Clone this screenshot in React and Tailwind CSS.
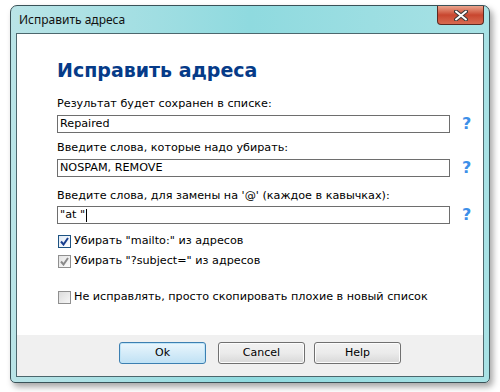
const font = { fontFamily: '"DejaVu Sans", Verdana, sans-serif' }

function Check({ state }) {
  if (state === 'on') {
    return (
      <span className="flex h-[13px] w-[13px] items-center justify-center border border-[#1d5281] bg-gradient-to-br from-[#dfe9f5] to-[#ffffff]">
        <svg width="9" height="9" viewBox="0 0 9 9">
          <path d="M1 4.5 L3.5 7.5 L8 1" fill="none" stroke="#1a3f8f" strokeWidth="2" />
        </svg>
      </span>
    )
  }
  if (state === 'dim') {
    return (
      <span className="flex h-[13px] w-[13px] items-center justify-center border border-[#8f8f8f] bg-gradient-to-br from-[#e3e3e3] to-[#fbfbfb]">
        <svg width="9" height="9" viewBox="0 0 9 9">
          <path d="M1 4.5 L3.5 7.5 L8 1" fill="none" stroke="#8a8a8a" strokeWidth="2" />
        </svg>
      </span>
    )
  }
  return <span className="block h-[13px] w-[13px] border border-[#8f8f8f] bg-gradient-to-br from-[#dcdcdc] to-[#f6f6f6]" />
}

function Field({ value, caret }) {
  return (
    <div className="flex items-center">
      <div className="flex h-[18px] w-[393px] items-center border border-[#6e6e6e] bg-white px-[2px] text-[11.2px] text-black">
        <span>{value}</span>
        {caret && <span className="ml-[1px] h-[13px] w-[1px] bg-black" />}
      </div>
      <span className="ml-[12px] text-[16px] font-bold leading-none text-[#3d8fe8]">?</span>
    </div>
  )
}

function Btn({ children, focus, className }) {
  return (
    <div
      className={
        'flex h-[22px] w-[87px] items-center justify-center rounded-[3px] border text-[11px] text-black ' +
        (focus
          ? 'border-[#3c7fb1] bg-gradient-to-b from-[#eaf6fd] to-[#c0e1f4] shadow-[inset_0_0_0_1px_#bfe4f7] '
          : 'border-[#707070] bg-gradient-to-b from-[#f2f2f2] via-[#ebebeb] to-[#d8d8d8] shadow-[inset_0_0_0_1px_#fcfcfc] ') +
        (className || '')
      }
    >
      {children}
    </div>
  )
}

export default function App() {
  return (
    <div className="h-[392px] w-[500px] overflow-hidden bg-white pl-[10px] pt-[5px]" style={font}>
      <div className="flex h-[378px] w-[480px] flex-col rounded-t-[7px] rounded-b-[5px] border border-[#3a5258] bg-gradient-to-r from-[#b9e4e7] via-[#8fdadf] to-[#a8e2e5] shadow-[3px_4px_6px_rgba(0,0,0,0.35)]">
        <div className="flex h-[27px] shrink-0 items-start">
          <span
            className="ml-[8px] mt-[6px] text-[12px] leading-[15px] text-[#111]"
            style={{ fontFamily: '"Noto Sans", "Open Sans", sans-serif' }}
          >
            Исправить адреса
          </span>
          <div className="ml-auto mr-[5px] flex h-[19px] w-[47px] items-center justify-center rounded-b-[4px] border border-t-0 border-[#5b2a22] bg-gradient-to-b from-[#eaa38c] via-[#c8462f] to-[#d86a50]">
            <svg width="14" height="11" viewBox="0 0 14 11">
              <path d="M2 1.5 L12 9.5 M12 1.5 L2 9.5" stroke="#3a3a3a" strokeWidth="4" strokeLinecap="round" />
              <path d="M2 1.5 L12 9.5 M12 1.5 L2 9.5" stroke="#ffffff" strokeWidth="2" strokeLinecap="round" />
            </svg>
          </div>
        </div>
        <div className="mx-[5px] flex h-[344px] flex-col border border-[#4c676d] bg-white">
          <div className="flex flex-1 flex-col pl-[40px]">
            <h1 className="mt-[25px] text-[19px] font-bold leading-[22px] text-[#063b88]">Исправить адреса</h1>
            <p className="mt-[15px] text-[11.2px] leading-[16px] text-black">Результат будет сохранен в списке:</p>
            <div className="mt-[3px]">
              <Field value="Repaired" />
            </div>
            <p className="mt-[7px] text-[11.2px] leading-[16px] text-black">Введите слова, которые надо убирать:</p>
            <div className="mt-[3px]">
              <Field value="NOSPAM, REMOVE" />
            </div>
            <p className="mt-[11px] text-[11.2px] leading-[16px] text-black">
              Введите слова, для замены на '@' (каждое в кавычках):
            </p>
            <div className="mt-[2px]">
              <Field value={'"at "'} caret />
            </div>
            <label className="mt-[9px] flex h-[16px] items-center gap-[3px] pl-[1px] text-[11.2px] text-black">
              <Check state="on" />
              <span>Убирать "mailto:" из адресов</span>
            </label>
            <label className="mt-[4px] flex h-[16px] items-center gap-[3px] pl-[1px] text-[11.2px] text-black">
              <Check state="dim" />
              <span>Убирать "?subject=" из адресов</span>
            </label>
            <label className="mt-[20px] flex h-[16px] items-center gap-[3px] pl-[1px] text-[11.2px] text-black">
              <Check state="off" />
              <span>Не исправлять, просто скопировать плохие в новый список</span>
            </label>
          </div>
          <div className="flex h-[41px] shrink-0 items-start bg-[#f0f0f0] pl-[102px] pt-[7px]">
            <Btn focus>Ok</Btn>
            <Btn className="ml-[12px]">Cancel</Btn>
            <Btn className="ml-[9px]">Help</Btn>
          </div>
        </div>
      </div>
    </div>
  )
}
